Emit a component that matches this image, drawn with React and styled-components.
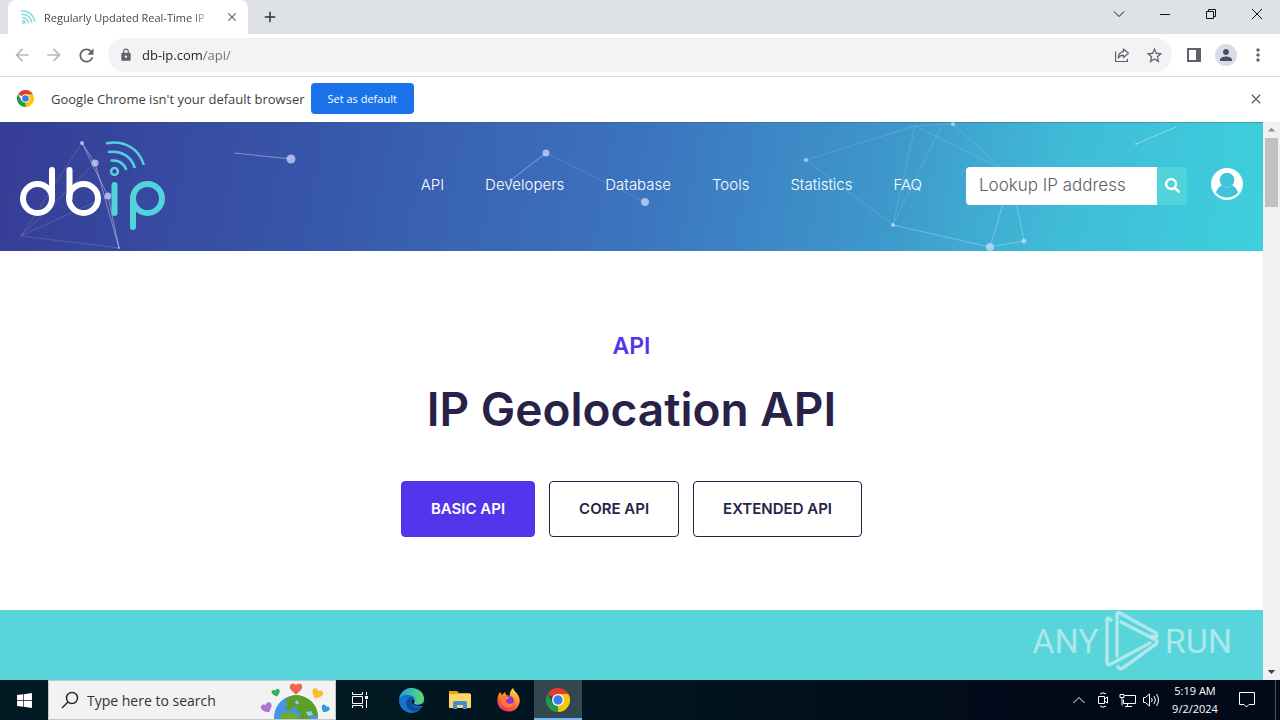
import React from "react";
import styled, { createGlobalStyle } from "styled-components";
import {
    MdArrowBack,
    MdArrowForward,
    MdRefresh,
    MdLock,
    MdStarBorder,
    MdPerson,
    MdMoreVert,
    MdClose,
    MdAdd,
} from "react-icons/md";
import { FaSearch, FaWindows } from "react-icons/fa";

const NAV = ["API", "Developers", "Database", "Tools", "Statistics", "FAQ"];
const PLANS = ["BASIC API", "CORE API", "EXTENDED API"];

const App = () => (
    <Desktop>
        <GlobalStyle />
        <TabStrip />
        <Toolbar />
        <InfoBar />
        <Viewport>
            <Page>
                <SiteHeader />
                <Intro>
                    <Eyebrow>API</Eyebrow>
                    <Title>IP Geolocation API</Title>
                    <Plans>
                        {PLANS.map((plan, i) => (
                            <PlanButton key={plan} $active={i === 0}>{plan}</PlanButton>
                        ))}
                    </Plans>
                </Intro>
                <Band />
            </Page>
            <Scrollbar>
                <ScrollArrow $color="#8a8a8a" viewBox="0 0 17 17"><path d="M4.5 10h8l-4-4z" /></ScrollArrow>
                <ScrollThumb />
                <ScrollArrow $color="#404040" viewBox="0 0 17 17"><path d="M4.5 6.5h8l-4 4z" /></ScrollArrow>
            </Scrollbar>
            <Watermark />
        </Viewport>
        <Taskbar />
    </Desktop>
);

const TabStrip = () => (
    <Strip>
        <Tab>
            <svg width="16" height="16" viewBox="0 0 16 16" fill="none" stroke="#8fd8dd" strokeWidth="1.6" strokeLinecap="round">
                <circle cx="3.8" cy="13" r="1.3" />
                <path d="M2.5 8.8q5 0 6 5M2 5.2q8 .2 9.8 7.8M1.6 1.8Q12 2 14.8 12" />
            </svg>
            <TabTitle>Regularly Updated Real-Time IP</TabTitle>
            <IconButton $size={16} aria-label="Close tab"><MdClose size={14} /></IconButton>
        </Tab>
        <IconButton $size={28} $color="#303236" aria-label="New tab"><MdAdd size={18} /></IconButton>
        <WindowControls>
            <WindowButton aria-label="Search tabs">
                <svg width="12" height="12" viewBox="0 0 12 12"><path d="M1 3.5l5 5 5-5" /></svg>
            </WindowButton>
            <WindowButton aria-label="Minimize">
                <svg width="12" height="12" viewBox="0 0 12 12"><path d="M1 6.5h10" /></svg>
            </WindowButton>
            <WindowButton aria-label="Restore">
                <svg width="12" height="12" viewBox="0 0 12 12"><path d="M1.5 3.5h7v7h-7zM3.5 3.5v-2h7v7h-2" /></svg>
            </WindowButton>
            <WindowButton aria-label="Close">
                <svg width="12" height="12" viewBox="0 0 12 12"><path d="M1 1l10 10M11 1L1 11" /></svg>
            </WindowButton>
        </WindowControls>
    </Strip>
);

const Toolbar = () => (
    <ToolbarRow>
        <IconButton $size={32} $color="#b6b8bb" aria-label="Back"><MdArrowBack size={20} /></IconButton>
        <IconButton $size={32} $color="#b6b8bb" aria-label="Forward"><MdArrowForward size={20} /></IconButton>
        <IconButton $size={32} aria-label="Reload"><MdRefresh size={21} /></IconButton>
        <Omnibox>
            <MdLock size={14} color="#5f6368" />
            <AddressInput aria-label="Address" defaultValue="db-ip.com/api/" />
            <IconButton $size={32} aria-label="Share">
                <svg width="16" height="16" viewBox="0 0 16 16" fill="none" stroke="currentColor" strokeWidth="1.2">
                    <path d="M1.6 4.5v10h11.8v-2.5" />
                    <path d="M9.4 2l5 4.3-5 4.2V8.2C7 8.2 5.5 9 4.2 11c.3-3.6 2-6 5.2-6.4z" strokeLinejoin="round" />
                </svg>
            </IconButton>
            <IconButton $size={32} aria-label="Bookmark"><MdStarBorder size={19} /></IconButton>
        </Omnibox>
        <IconButton $size={32} aria-label="Side panel">
            <svg width="14" height="14" viewBox="0 0 14 14"><path d="M0 0h14v14H0zM2 2v10h7V2z" fill="currentColor" fillRule="evenodd" /></svg>
        </IconButton>
        <IconButton $size={32} $color="#4a4d66" aria-label="Profile"><Avatar><MdPerson size={18} /></Avatar></IconButton>
        <IconButton $size={32} aria-label="Menu"><MdMoreVert size={20} /></IconButton>
    </ToolbarRow>
);

const ChromeLogo = ({ size }) => (
    <svg width={size} height={size} viewBox="0 0 48 48">
        <path d="M24 24L3.2 12A24 24 0 0 1 44.8 12z" fill="#e33b2e" />
        <path d="M24 24V12h20.8A24 24 0 0 1 24 48z" fill="#fdc60a" />
        <path d="M24 48A24 24 0 0 1 3.2 12L13.6 30 34.4 30z" fill="#229a48" />
        <path d="M34.4 30L24 48 24 24z" fill="#fdc60a" />
        <circle cx="24" cy="24" r="12" fill="#fff" />
        <circle cx="24" cy="24" r="9.4" fill="#3b7ded" />
    </svg>
);

const InfoBar = () => (
    <InfoRow>
        <ChromeLogo size={17} />
        <InfoText>Google Chrome isn't your default browser</InfoText>
        <DefaultButton>Set as default</DefaultButton>
        <Spacer />
        <IconButton $size={16} aria-label="Dismiss"><MdClose size={16} /></IconButton>
    </InfoRow>
);

const SiteHeader = () => (
    <Header>
        <Constellation />
        <LogoLink href="#" aria-label="db-ip home"><Logo /></LogoLink>
        <Nav>
            {NAV.map(item => <NavLink key={item} href="#">{item}</NavLink>)}
        </Nav>
        <Lookup>
            <LookupInput aria-label="Lookup IP address" placeholder="Lookup IP address" />
            <LookupButton aria-label="Search"><FaSearch size={15} /></LookupButton>
        </Lookup>
        <AccountLink href="#" aria-label="Account">
            <svg width="32" height="32" viewBox="0 0 32 32">
                <circle cx="16" cy="16" r="16" fill="#fff" />
                <path d="M5 24.5C6.500 20 9 18.2 11 17.2Q16 22 21 17.2C23 18.2 25.500 20 27 24.5Q22.5 29.5 16 29.5T5 24.5z" fill="#3fc3da" />
                <circle cx="16" cy="12" r="7.3" fill="#3fc3da" />
            </svg>
        </AccountLink>
    </Header>
);

const Logo = () => (
    <svg width="146" height="92" viewBox="0 0 146 92" fill="none" strokeLinecap="round">
        <g stroke="#fff" strokeWidth="6">
            <circle cx="17.5" cy="58.5" r="14.5" />
            <path d="M32 30v28.5" />
            <circle cx="63.5" cy="58.5" r="14.5" />
            <path d="M49.5 30v28.5" />
        </g>
        <g stroke="#52d3dc" strokeWidth="6">
            <path d="M94.5 45v28" />
            <circle cx="127.5" cy="58.5" r="14.5" />
            <path d="M113 58.5V87" />
        </g>
        <g stroke="#52d3dc" strokeWidth="2.5">
            <circle cx="94.5" cy="31.5" r="3.4" />
            <path d="M91.5 20.5c6.5-.5 12 2.5 14.5 8.500M89 12c12-1.5 22 4 25.5 15M87 3.3c16-3 31 4 36.5 20.5" />
        </g>
    </svg>
);

const Constellation = () => (
    <Backdrop viewBox="0 0 1263 129" preserveAspectRatio="none" fill="none" stroke="#fff">
        <g strokeOpacity=".38">
            <path d="M82 21l26 53 11 52M82 21l13 20 24 85M234 31l57 6M511 58l35-27" />
            <path d="M1136 22l40-17" />
        </g>
        <g strokeOpacity=".14">
            <path d="M82 21L21 114l98 12M95 41L21 114l87-40" />
            <path d="M546 31l99 49M806 38l109-34 38-2 49 45M806 38l87 65 22-99M915 4l87 43M941 5l-48 98" />
            <path d="M893 103l97 22 34-6-8-40M990 125l14-46" strokeOpacity=".28" />
        </g>
        <g fill="#d4ddff" fillOpacity=".7" stroke="none">
            <circle cx="82" cy="21" r="2" />
            <circle cx="95" cy="41" r="3.5" />
            <circle cx="108" cy="74" r="3.5" />
            <circle cx="119" cy="126" r="1" />
            <circle cx="291" cy="37" r="4.5" />
            <circle cx="546" cy="31" r="3.5" />
            <circle cx="511" cy="58" r="1.5" />
            <circle cx="645" cy="80" r="4" />
            <circle cx="806" cy="38" r="2" />
            <circle cx="893" cy="103" r="2" />
            <circle cx="953" cy="2" r="2" />
            <circle cx="990" cy="125" r="4" />
            <circle cx="1024" cy="119" r="2.5" />
            <circle cx="1136" cy="22" r="1" />
        </g>
    </Backdrop>
);

const Watermark = () => (
    <Mark>
        <span>ANY</span>
        <svg width="54" height="60" viewBox="0 0 54 60" fill="none" stroke="currentColor" strokeWidth="3.5" strokeLinejoin="round" strokeLinecap="round">
            <path d="M6 9q-4-4-4 1v41q0 4 4 2L45 32" />
            <path d="M12 45V4q0-3 3-2l36 20q2 2 0 4l-4-1" />
            <path d="M16 11l35 18q2 2 0 4L18 57q-3 2-5-1" />
        </svg>
        <span>RUN</span>
    </Mark>
);

const Taskbar = () => (
    <Bar>
        <TaskButton aria-label="Start"><FaWindows size={17} /></TaskButton>
        <TaskSearch>
            <svg width="18" height="18" viewBox="0 0 18 18" fill="none" stroke="#222" strokeWidth="1.4">
                <circle cx="11" cy="7" r="5.5" />
                <path d="M7 11l-6 6" />
            </svg>
            <TaskInput aria-label="Type here to search" placeholder="Type here to search" />
            <Earth />
        </TaskSearch>
        <TaskButton aria-label="Task view">
            <svg width="18" height="16" viewBox="0 0 18 16" fill="none" stroke="#fff">
                <path d="M1.5 0v2.5h10V0M1.5 4.5h10v7h-10zM1.5 16v-2.5h10V16M15.5 0v3M15.5 8v8" />
                <path d="M14 4h3v3h-3z" fill="#fff" stroke="none" />
            </svg>
        </TaskButton>
        <Apps>
            <TaskButton aria-label="Edge">
                <svg width="25" height="25" viewBox="0 0 24 24">
                    <defs>
                        <linearGradient id="edgeTop" x1="0" x2="1"><stop stopColor="#1b9de2" /><stop offset="1" stopColor="#5fdc68" /></linearGradient>
                    </defs>
                    <circle cx="12" cy="12" r="12" fill="#1473cb" />
                    <path d="M0 11C1 4 6 0 12 0c7 0 12 5 12 10 0 4-3 6-6 6-4 0-5-1-3-3 1-3-1-6-5-6C5 6 1 8 0 11z" fill="url(#edgeTop)" />
                    <path d="M10 9c-5 3-4 11 3 13 4 1 7-1 9-4-5 2-10 0-10-5 0-2 1-3 2-3-1-1-3-2-4-1z" fill="#114a94" />
                    <path d="M13 11c-1 1-1 3 0 4 2 2 6 3 10 2 1-1 1-2 1-3-2 2-5 3-8 2-2 0-2-2-1-3 0-1-1-2-2-2z" fill="#02131e" />
                </svg>
            </TaskButton>
            <TaskButton aria-label="File Explorer">
                <svg width="22" height="18" viewBox="0 0 22 18">
                    <path d="M0 0h8l2 2h11v4H0z" fill="#e8a420" />
                    <path d="M0 3h22v14H0z" fill="#fbd667" />
                    <path d="M4 18v-6q0-2 2-2h10q2 0 2 2v6h-4v-4H8v4z" fill="#3d8fcf" />
                </svg>
            </TaskButton>
            <TaskButton aria-label="Firefox">
                <svg width="24" height="24" viewBox="0 0 24 24">
                    <defs>
                        <linearGradient id="fox" x1=".8" y1="0" x2=".3" y2="1"><stop stopColor="#ffe34a" /><stop offset=".5" stopColor="#ff8427" /><stop offset="1" stopColor="#f0286a" /></linearGradient>
                    </defs>
                    <path d="M3 4l2 3 3-3 1 3 4 1c-1-3 1-6 3-8 1 3 3 4 5 7 3 5 2 10-2 14-5 4-12 3-16-1C-1 15 0 8 3 4z" fill="url(#fox)" />
                    <circle cx="12" cy="13" r="5" fill="#8a35d9" />
                    <path d="M5 9c3-2 5 0 8 0-1 2-4 2-4 4 0 3 5 4 8 1-1 6-8 7-11 3-2-2-2-5-1-8z" fill="#ff7a35" />
                </svg>
            </TaskButton>
            <TaskButton $active aria-label="Google Chrome"><ChromeLogo size={24} /></TaskButton>
        </Apps>
        <Spacer />
        <Tray>
            <TrayButton aria-label="Hidden icons">
                <svg width="14" height="16" viewBox="0 0 14 16"><path d="M1.5 11L7 5.5l5.5 5.5" /></svg>
            </TrayButton>
            <TrayButton aria-label="Meet now">
                <svg width="14" height="18" viewBox="0 0 14 18"><path d="M2.5 5.5h6v7h-6zM8.5 8l3-2v6l-3-2M4 3q3-2.5 6 0M4 15q3 2.5 6 0" /></svg>
            </TrayButton>
            <TrayButton aria-label="Network">
                <svg width="17" height="16" viewBox="0 0 17 16"><path d="M5.5 3.5h11v8h-12v-4M1 2.5h4v3H1zM3 5.5v8M8.5 12v2.5M6 14.5h7" /></svg>
            </TrayButton>
            <TrayButton aria-label="Volume">
                <svg width="18" height="16" viewBox="0 0 18 16"><path d="M1.5 5.5h2l4-3.5v12l-4-3.5h-2zM9.5 6q1.5 2 0 4M12 4q3 4 0 8M14.5 2q4 6 0 12" /></svg>
            </TrayButton>
        </Tray>
        <Clock>
            <span>5:19 AM</span>
            <span>9/2/2024</span>
        </Clock>
        <TaskButton aria-label="Notifications">
            <svg width="18" height="18" viewBox="0 0 18 18" fill="none" stroke="#fff"><path d="M1.5 1.5h15v12H11l-2.5 2.5L6 13.5H1.5z" /></svg>
        </TaskButton>
        <ShowDesktop aria-label="Show desktop" />
    </Bar>
);

const Earth = () => (
    <svg width="72" height="38" viewBox="0 0 72 38">
        <defs>
            <clipPath id="globe"><circle cx="36" cy="36" r="22" /></clipPath>
            <path id="heart" d="M0 6C-7 1-8-2-6-5-4-7-1-6 0-4 1-6 4-7 6-5 8-2 7 1 0 6z" />
        </defs>
        <g clipPath="url(#globe)">
            <circle cx="36" cy="36" r="22" fill="#4a93ea" />
            <path d="M27 17l9-4 7 2 9 5 7 10-1 6-6-3-3 5H38l3-6-5-2 2-4-5 1-4 3-4-3 3-4-3-2z" fill="#5c9e26" />
            <path d="M22 32l8-1 6 2 4 5H20z" fill="#69ad31" />
            <path d="M36 19l3 2-1 3-3-2zM46 31l5-1 2 4-5 1z" fill="#8ccbf5" />
        </g>
        <use href="#heart" transform="translate(36 8) scale(.9)" fill="#ee654f" />
        <use href="#heart" transform="translate(16 12) rotate(-15) scale(.6)" fill="#30ac66" />
        <use href="#heart" transform="translate(57 13) rotate(25) scale(.8)" fill="#f8bd2b" />
        <use href="#heart" transform="translate(7 27) rotate(-25) scale(.8)" fill="#a978d5" />
        <use href="#heart" transform="translate(65 28) rotate(30) scale(.6)" fill="#3197df" />
    </svg>
);

const GlobalStyle = createGlobalStyle`
    * {
        box-sizing: border-box;
    }

    body {
        margin: 0;
        font-family: "Open Sans", "Noto Sans", sans-serif;
    }

    button, input {
        font-family: inherit;
        border: 0;
        padding: 0;
        margin: 0;
        background: none;
        outline: 0;
    }

    svg {
        display: block;
        flex: none;
    }
`

const Desktop = styled.div`
    height: 100vh;
    display: flex;
    flex-direction: column;
    overflow: hidden;
`

const Spacer = styled.div`
    flex: 1;
`

const IconButton = styled.button`
    display: flex;
    align-items: center;
    justify-content: center;
    flex: none;
    width: ${p => p.$size}px;
    height: ${p => p.$size}px;
    color: ${p => p.$color || "#5f6368"};
`

const Strip = styled.div`
    display: flex;
    align-items: center;
    height: 34px;
    flex: none;
    padding-left: 8px;
    background: #dee1e6;
`

const Tab = styled.div`
    display: flex;
    align-items: center;
    width: 240px;
    height: 34px;
    padding: 0 8px 0 12px;
    margin-right: 8px;
    background: #fff;
    border-radius: 8px 8px 0 0;
`

const TabTitle = styled.span`
    flex: 1;
    margin: 0 12px 0 8px;
    white-space: nowrap;
    font-size: 11px;
    color: #45474a;
    mask-image: linear-gradient(to right, #000 88%, transparent);
`

const WindowControls = styled.div`
    display: flex;
    align-self: stretch;
    margin-left: auto;
`

const WindowButton = styled.button`
    display: flex;
    align-items: center;
    justify-content: center;
    width: 46px;
    padding-bottom: 6px;

    svg {
        fill: none;
        stroke: #111;
    }
`

const ToolbarRow = styled.div`
    display: flex;
    align-items: center;
    height: 43px;
    flex: none;
    padding: 0 6px;
    background: #fff;
    border-bottom: 1px solid #dadce0;
`

const Omnibox = styled.div`
    display: flex;
    align-items: center;
    flex: 1;
    height: 34px;
    margin: 0 6px;
    padding: 0 2px 0 11px;
    border-radius: 17px;
    background: #f1f3f4;
`

const AddressInput = styled.input`
    flex: 1;
    min-width: 0;
    margin-left: 9px;
    font-size: 13px;
    color: #202124;
    background: linear-gradient(to right, #202124 61px, #6b6f74 61px);
    background-clip: text;
    -webkit-text-fill-color: transparent;
`

const Avatar = styled.span`
    display: flex;
    align-items: center;
    justify-content: center;
    width: 22px;
    height: 22px;
    border-radius: 50%;
    background: #dadce6;
`

const InfoRow = styled.div`
    display: flex;
    align-items: center;
    height: 45px;
    flex: none;
    padding: 0 16px 2px 17px;
    background: #fff;
`

const InfoText = styled.span`
    margin: 0 6px 0 17px;
    font-size: 13px;
    color: #3c4043;
`

const DefaultButton = styled.button`
    height: 31px;
    padding: 0 17px;
    border-radius: 4px;
    background: #1a73e8;
    color: #fff;
    font-size: 11px;
`

const Viewport = styled.div`
    position: relative;
    display: flex;
    flex: 1;
    min-height: 0;
`

const Page = styled.main`
    display: flex;
    flex-direction: column;
    flex: 1;
    min-width: 0;
    font-family: Inter, sans-serif;
    background: #fff;
`

const Header = styled.header`
    position: relative;
    display: flex;
    align-items: center;
    height: 129px;
    flex: none;
    padding: 0 20px 2px;
    background: linear-gradient(100deg, #363c95 0%, #3755aa 24%, #3c73be 50%, #3e98cc 70%, #40bcd7 84%, #3dd0dd 100%);
    box-shadow: inset 0 1px rgba(60, 80, 90, 0.35);
`

const Backdrop = styled.svg`
    position: absolute;
    inset: 0;
    width: 100%;
    height: 100%;
`

const LogoLink = styled.a`
    position: relative;
`

const Nav = styled.nav`
    position: relative;
    display: flex;
    gap: 41px;
    margin-left: auto;
    margin-right: 44px;
    padding-bottom: 2px;
`

const NavLink = styled.a`
    color: #fff;
    font-size: 15px;
    font-weight: 300;
    text-decoration: none;
`

const Lookup = styled.form`
    position: relative;
    display: flex;
    height: 38px;
    margin-right: 24px;
    border-radius: 4px;
    overflow: hidden;
`

const LookupInput = styled.input`
    width: 191px;
    padding: 0 13px 2px;
    background: #fff;
    font-size: 17px;
    font-weight: 300;

    &::placeholder {
        color: #5d6068;
        opacity: 1;
    }
`

const LookupButton = styled.button`
    display: flex;
    align-items: center;
    justify-content: center;
    width: 30px;
    background: #51d4d9;
    color: #fff;
`

const AccountLink = styled.a`
    position: relative;
    padding-bottom: 4px;
`

const Intro = styled.section`
    display: flex;
    flex-direction: column;
    align-items: center;
    height: 359px;
    flex: none;
    padding-top: 80px;
`

const Eyebrow = styled.p`
    margin: 0;
    font-size: 23px;
    line-height: 30px;
    font-weight: 600;
    color: #5236e8;
`

const Title = styled.h1`
    margin: 17px 0 41px;
    font-size: 46px;
    line-height: 62px;
    font-weight: 600;
    color: #282248;
`

const Plans = styled.div`
    display: flex;
    gap: 14px;
`

const PlanButton = styled.button`
    height: 56px;
    padding: 0 29px 2px;
    border: 1px solid ${p => (p.$active ? "#5236e8" : "#282248")};
    border-radius: 4px;
    background: ${p => (p.$active ? "#5236eb" : "#fff")};
    color: ${p => (p.$active ? "#fff" : "#282248")};
    font-size: 15px;
    font-weight: 600;
`

const Band = styled.section`
    flex: 1;
    background: #57d5da;
`

const Scrollbar = styled.div`
    display: flex;
    flex-direction: column;
    justify-content: space-between;
    width: 17px;
    background: #f1f1f1;
`

const ScrollArrow = styled.svg`
    width: 17px;
    height: 16px;
    fill: ${p => p.$color};
`

const ScrollThumb = styled.div`
    height: 69px;
    margin: 0 2px auto;
    background: #c1c1c1;
`

const Mark = styled.div`
    position: absolute;
    right: 48px;
    bottom: 9px;
    display: flex;
    align-items: center;
    gap: 6px;
    font-family: Roboto, sans-serif;
    font-size: 34px;
    line-height: 60px;
    color: rgba(210, 240, 244, 0.7);
`

const Bar = styled.footer`
    display: flex;
    height: 40px;
    flex: none;
    background: linear-gradient(to right, #011a24, #011520 50%, #020a1a 80%);
`

const TaskButton = styled.button`
    display: flex;
    align-items: center;
    justify-content: center;
    width: 48px;
    flex: none;
    color: #fff;
    background: ${p => (p.$active ? "#334750" : "none")};
    box-shadow: ${p => (p.$active ? "inset 0 -2px #76b9ed" : "none")};
`

const TaskSearch = styled.div`
    display: flex;
    align-items: center;
    width: 288px;
    padding-left: 12px;
    padding-right: 3px;
    background: #f2f2f2;
    border: 1px solid #c3c5c6;
`

const TaskInput = styled.input`
    flex: 1;
    min-width: 0;
    margin-left: 8px;
    font-size: 14px;

    &::placeholder {
        color: #333;
        opacity: 1;
    }
`

const Apps = styled.div`
    display: flex;
    gap: 1px;
    margin-left: 3px;
`

const Tray = styled.div`
    display: flex;
`

const TrayButton = styled.button`
    display: flex;
    align-items: center;
    justify-content: center;
    width: 24px;

    svg {
        fill: none;
        stroke: #fff;
    }
`

const Clock = styled.div`
    display: flex;
    flex-direction: column;
    align-items: center;
    justify-content: center;
    width: 60px;
    padding-left: 4px;
    color: #fff;
    font-size: 11px;
    line-height: 18px;
    white-space: nowrap;
`

const ShowDesktop = styled.button`
    width: 5px;
    margin-left: 4px;
    border-left: 1px solid #4a5260;
`

export default App;
